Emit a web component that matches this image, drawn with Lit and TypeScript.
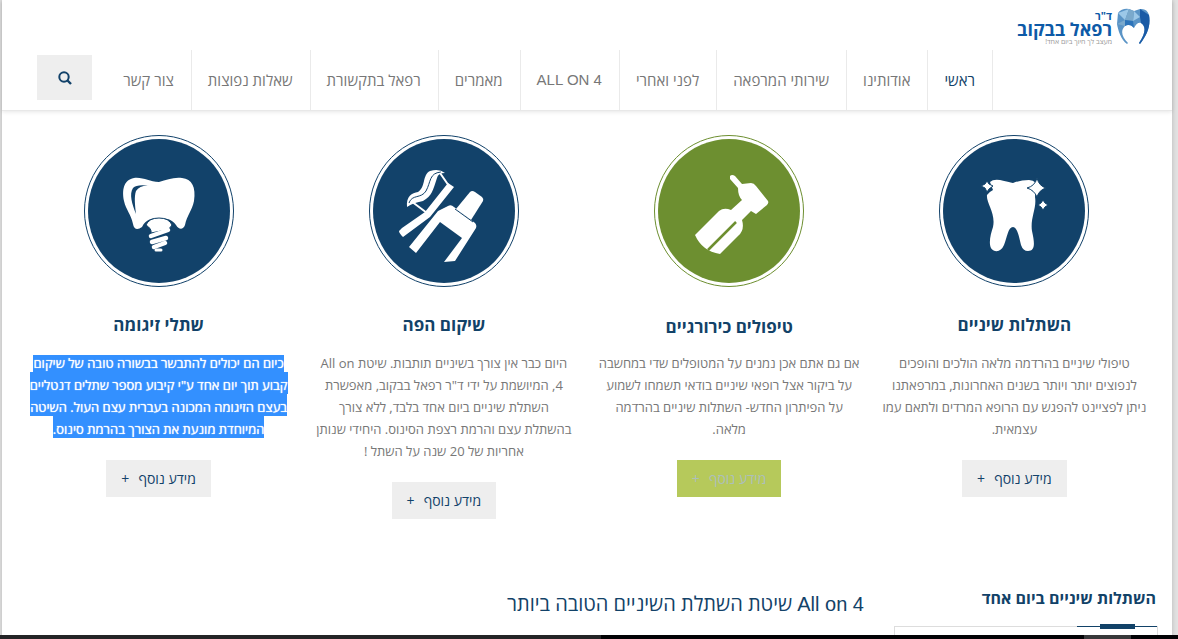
import { LitElement, html, css, svg } from "lit";
import { customElement, property } from "lit/decorators.js";
import { classMap } from "lit/directives/class-map.js";

const implant = svg`
  <path fill="#fff" d="M75 47C65 47 60 42 50 43C39 45 38 56 40 66C42 75 47 79 49 89C50 95 54 95 58 92C62 84 68 83 75 83C82 83 88 84 92 90C95 95 99 95 101 90C103 80 108 76 110 66C112 52 108 44 98 43C89 42 83 45 75 47Z"/>
  <path fill="currentColor" d="M52 79C48 69 45 59 49 53Q53 49 66 51Q56 50 52 56C50 62 51 70 52 79Z"/>
  <path fill="#fff" stroke="currentColor" stroke-width="1" d="M62 90Q65 83 75 83Q85 83 88 90Q86 94 82 95L67 98Q68 94 62 90Z"/>
  <g fill="none" stroke="#fff" stroke-width="4.5" stroke-linecap="round"><path d="M67 101L84 95M68 107L82 103M70 112L81 108"/><path stroke-width="3" d="M72 115L77 115"/></g>`;

const rehab = svg`
  <path fill="#fff" d="M38 72C37 61 43 58 49 57C57 52 53 40 61 36Q70 33 76 38Q69 38 68 43C64 55 63 61 54 66Q43 68 38 72Z"/>
  <path fill="none" stroke="currentColor" stroke-width="1" d="M40 68C43 59 52 64 57 56C62 47 60 38 72 37"/>
  <path fill="none" stroke="#fff" stroke-width="2" d="M71 38L80 51M42 66L58 78"/>
  <path fill="#fff" d="M79 48L85 52L61 82L34 102Q30 98 30 96L33 93L56 77Z"/>
  <path fill="#fff" d="M101 57Q103 55 106 57L113 62Q115 64 114 66L102 85L87 74Z"/>
  <path fill="#fff" d="M79 71Q82 69 85 72L106 88Q108 90 107 93L86 126L75 127L93 103L71 87L47 118L40 112L69 76Z"/>
  <path stroke="currentColor" stroke-width="1" d="M86 74L104 87"/>`;

const drill = svg`
  <path fill="#fff" d="M76 41Q78 39 81 41L88 49L97 48Q100 48 102 51L114 66Q115 68 113 70L102 79L97 76L88 85Q91 95 84 101L66 119Q48 116 41 100L65 76Q70 72 77 75L88 65Q84 61 84 53L76 44Z"/>
  <path fill="none" stroke="currentColor" stroke-width="2.5" d="M54 115L82 87"/>`;

const tooth = svg`
  <path fill="#fff" d="M51 47Q54 44 61 45Q70 47 74 48Q81 45 90 45Q94 45 97 48L96 62C98 73 91 83 93 96C96 109 96 116 89 116Q84 116 82 110C80 101 78 92 74 92C69 92 68 103 65 110Q62 117 56 116C48 114 51 101 54 92C57 78 47 68 48 60Q50 57 54 55Z"/>
  <g fill="#fff" stroke="currentColor" stroke-width="1"><path d="M48 46L50 49L54 51L50 54L48 57L46 53L42 51L46 49ZM98 43Q100 51 107 53Q100 55 98 62Q95 55 88 53Q96 51 98 43ZM104 65L106 68L109 70L106 72L104 75L102 72L99 70L102 68Z"/></g>`;

interface Service {
  title: string;
  lines: string[];
  icon: unknown;
  active?: boolean;
  marked?: boolean;
}

const NAV = ["ראשי", "אודותינו", "שירותי המרפאה", "לפני ואחרי", "ALL ON 4", "מאמרים", "רפאל בתקשורת", "שאלות נפוצות", "צור קשר"];

const SERVICES: Service[] = [
  {
    title: "השתלות שיניים",
    icon: tooth,
    lines: ["טיפולי שיניים בהרדמה מלאה הולכים והופכים", "לנפוצים יותר ויותר בשנים האחרונות, במרפאתנו", "ניתן לפציינט להפגש עם הרופא המרדים ולתאם עמו", "עצמאית."],
  },
  {
    title: "טיפולים כירורגיים",
    icon: drill,
    active: true,
    lines: ["אם גם אתם אכן נמנים על המטופלים שדי במחשבה", "על ביקור אצל רופאי שיניים בודאי תשמחו לשמוע", "על הפיתרון החדש- השתלות שיניים בהרדמה", "מלאה."],
  },
  {
    title: "שיקום הפה",
    icon: rehab,
    lines: ["היום כבר אין צורך בשיניים תותבות. שיטת All on", "4, המיושמת על ידי ד\"ר רפאל בבקוב, מאפשרת", "השתלת שיניים ביום אחד בלבד, ללא צורך", "בהשתלת עצם והרמת רצפת הסינוס. היחידי שנותן", "אחריות של 20 שנה על השתל !"],
  },
  {
    title: "שתלי זיגומה",
    icon: implant,
    marked: true,
    lines: ["כיום הם יכולים להתבשר בבשורה טובה של שיקום", "קבוע תוך יום אחד ע\"י קיבוע מספר שתלים דנטליים", "בעצם הזיגומה המכונה בעברית עצם העול. השיטה", "המיוחדת מונעת את הצורך בהרמת סינוס."],
  },
];

@customElement("service-card")
export class ServiceCard extends LitElement {
  @property({ attribute: false }) service!: Service;

  static styles = css`
    :host { display: block; padding: 0 8px; text-align: center; color: #124268; }
    .badge { display: block; width: 150px; height: 152px; margin: 0 auto; color: #12426a; }
    .title { margin: 26px 0 15px; font-size: 17px; line-height: 24px; font-weight: 700; }
    .text { margin: 0; font-size: 13px; line-height: 22px; color: #777; }
    .more { display: inline-block; margin-top: 20px; padding: 0 15px; background: #eee; color: #12426a; font-size: 14px; line-height: 37px; text-decoration: none; }
    .plus { margin-inline-start: 9px; }
    .active .badge { color: #6d8f30; }
    .active .title { margin: 28px 0 13px; }
    .active .more { background: #b6c95b; color: #adbfbb; }
    .marked .text { clip-path: inset(3px 0 0); }
    .mark { padding-top: 4px; background: #3390ff; color: #fff; text-shadow: 0 0 1px #fff; }
  `;

  render() {
    const s = this.service;
    const text = s.lines.map((line, i) => (i ? html`<br />${line}` : line));
    return html`
      <article class=${classMap({ active: !!s.active, marked: !!s.marked })}>
        <svg class="badge" viewBox="0 0 150 152" aria-hidden="true">
          <ellipse cx="75" cy="76" rx="74.5" ry="75.5" fill="#fff" stroke="currentColor" />
          <ellipse cx="75" cy="76" rx="71" ry="72" fill="currentColor" />
          ${s.icon}
        </svg>
        <h3 class="title">${s.title}</h3>
        <p class="text">${s.marked ? html`<mark class="mark">${text}</mark>` : text}</p>
        <a class="more" href="#">מידע נוסף<span class="plus">+</span></a>
      </article>`;
  }
}

@customElement("app-root")
export class AppRoot extends LitElement {
  static styles = css`
    :host { display: flex; flex-direction: column; min-height: 100vh; direction: rtl; background: #e2e2e2; font-family: "Open Sans", "Liberation Sans", Arial, sans-serif; color: #124268; }
    .page { flex: 1; margin: 0 6px 0 2px; background: #fff; box-shadow: 0 0 5px rgba(0, 0, 0, 0.2); }
    .header { border-bottom: 1px solid #e8e8e8; box-shadow: 0 1px 4px rgba(0, 0, 0, 0.1); }
    .brand { display: flex; gap: 5px; height: 50px; padding: 8px 22px 0; box-sizing: border-box; }
    .tooth { width: 33px; height: 38px; }
    .name { display: flex; flex-direction: column; color: #0d5aa7; font-weight: 700; padding-top: 2px; }
    .dr { font-size: 11px; line-height: 12px; }
    .full { font-size: 18px; line-height: 14px; }
    .tag { font-size: 7px; line-height: 12px; font-weight: 400; color: #999; }
    .bar { display: flex; align-items: flex-start; justify-content: space-between; padding: 0 179px 0 35px; }
    .menu { display: flex; margin: 0; padding: 0; list-style: none; border-right: 1px solid #eaeaea; }
    .item { border-left: 1px solid #eaeaea; }
    .item:last-child { border-left: 0; }
    .link { display: block; padding: 0 17px 0 16px; line-height: 60px; font-size: 15px; color: #777; text-decoration: none; white-space: nowrap; }
    .current { color: #124268; }
    .latin { font-family: "Liberation Sans", Arial, sans-serif; }
    .search { flex: none; display: grid; place-items: center; width: 55px; height: 45px; margin: 5px 0 0; padding: 0; border: 0; background: #eee; color: #12426a; }
    .glass { width: 14px; height: 14px; }
    .services { display: grid; grid-template-columns: repeat(4, 1fr); padding: 24px 15px 0 14px; min-height: 450px; box-sizing: border-box; }
    .lower { display: grid; grid-template-columns: 264px 1fr; column-gap: 30px; padding: 24px 14px 0 15px; }
    .side-title { margin: 0; padding-right: 2px; font-size: 16px; line-height: 26px; font-weight: 700; }
    .panel { display: flex; align-items: flex-start; height: 8px; margin-top: 15px; border: 1px solid #ddd; border-bottom: 0; }
    .accent { width: 80px; display: flex; justify-content: center; margin-top: -3px; background: linear-gradient(#124268, #124268) 0 2px / 100% 1px no-repeat; }
    .knob { width: 35px; height: 5px; background: #124268; }
    .main-title { margin: 6px 0 0; font-size: 20px; line-height: 26px; font-weight: 400; }
    .strip { position: fixed; left: 0; right: 0; bottom: 0; height: 4px; background: linear-gradient(90deg, #242426 0 51%, #020204 51% 92%, #38383a 92% 96%, #020204 96%); }
  `;

  render() {
    return html`
      <div class="page">
        <header class="header">
          <div class="brand">
            <svg class="tooth" viewBox="0 0 33 38" aria-hidden="true">
              <path fill="#5a94c6" d="M1 5Q5 0 12 1L17 3L23 1Q30 0 32 7C34 18 30 27 23 36L22 35C29 25 29 18 24 15Q20 14 17 20Q13 14 8 18C3 23 5 29 11 35L10 36C4 32 1 22 0 16Z"/>
              <path fill="#9cc8e8" d="M1 5L12 1L8 12ZM17 3L23 9L16 13Z"/>
              <path fill="#7aa9cc" d="M12 1L17 3L16 13L8 12ZM0 16L8 12L8 18Z"/>
              <path fill="#1a5ba6" d="M23 1L32 7L24 15L23 9ZM32 7C34 18 30 27 23 36L22 35C29 25 29 18 24 15Z"/>
              <path fill="#2c74ba" d="M8 12L16 13L17 20Q13 15 8 18Z"/>
            </svg>
            <div class="name"><span class="dr">ד"ר</span><span class="full">רפאל בבקוב</span><span class="tag">מעצב לך חיוך ביום אחד!</span></div>
          </div>
          <nav class="bar">
            <ul class="menu">
              ${NAV.map((label, i) => html`<li class="item"><a class=${classMap({ link: true, current: i === 0, latin: /^[A-Z]/.test(label) })} href="#">${label}</a></li>`)}
            </ul>
            <button class="search" type="button" aria-label="חיפוש">
              <svg class="glass" viewBox="0 0 14 14" fill="none" stroke="currentColor" stroke-width="2" aria-hidden="true"><circle cx="6" cy="6" r="4.7"/><path stroke-width="2.4" d="M9.5 9.5L13 13"/></svg>
            </button>
          </nav>
        </header>
        <main>
          <section class="services">${SERVICES.map((s) => html`<service-card .service=${s}></service-card>`)}</section>
          <section class="lower">
            <aside>
              <h4 class="side-title">השתלות שיניים ביום אחד</h4>
              <div class="panel"><div class="accent"><div class="knob"></div></div></div>
            </aside>
            <h2 class="main-title"><span class="latin">All on 4</span> שיטת השתלת השיניים הטובה ביותר</h2>
          </section>
        </main>
      </div>
      <div class="strip"></div>`;
  }
}
